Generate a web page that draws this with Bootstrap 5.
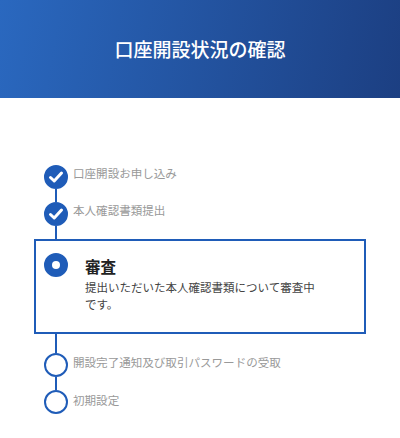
<!DOCTYPE html>
<html lang="ja">
<head>
<meta charset="utf-8">
<link href="https://cdn.jsdelivr.net/npm/bootstrap@5.3.0/dist/css/bootstrap.min.css" rel="stylesheet">
<style>
html,body{height:438px;overflow:hidden;}
body{font-family:"Noto Sans CJK JP","Liberation Sans",sans-serif;background:#fff;}
.hero{height:98px;background:linear-gradient(100deg,#2a68bf 0%,#1c3f82 100%);color:#fff;}
.hero h1{font-size:19px;font-weight:500;margin:0;}
.track{padding:67px 34px 0;}
.stepline{display:flex;align-items:stretch;height:37px;padding-left:10px;gap:5px;}
.stepline.last{height:24px;}
.dot{flex:none;width:24px;height:24px;border-radius:50%;border:2px solid #1f5cb8;background:#fff;display:flex;align-items:center;justify-content:center;}
.dot.done,.dot.now{background:#1f5cb8;}
.dot.now::after{content:"";width:8px;height:8px;border-radius:50%;background:#fff;}
.connect{display:block;width:2px;background:#1f5cb8;margin-left:21px;}
.c19{height:19px;}
.stepline .lbl{font-size:11.55px;line-height:16px;color:#999;white-space:nowrap;font-weight:400;}
.stepline .lbl.low1{padding-top:1px;}
.stepline .lbl.low2{padding-top:2px;}
.stepcol{display:flex;flex-direction:column;flex:none;width:24px;}
.stepcol .connect{margin-left:11px;flex:1;}
.activebox{height:95px;border:2px solid #1f5cb8;padding:12px 8px 0 8px;gap:17px;}
.activebox .ttl{font-size:15.5px;font-weight:700;line-height:22px;color:#222;margin:2px 0 2px;}
.activebox .txt{font-size:11.5px;line-height:17px;color:#444;margin:0;width:236px;}
</style>
</head>
<body>
<header class="hero d-flex align-items-center justify-content-center">
<h1>口座開設状況の確認</h1>
</header>
<main class="track">
<div class="stepline">
<div class="stepcol"><span class="dot done"><svg width="16" height="14" viewBox="0 0 16 14"><path d="M2.5 7.5 6.2 11 13.5 3" fill="none" stroke="#fff" stroke-width="3" stroke-linecap="round" stroke-linejoin="round"/></svg></span><span class="connect"></span></div>
<span class="lbl">口座開設お申し込み</span>
</div>
<div class="stepline">
<div class="stepcol"><span class="dot done"><svg width="16" height="14" viewBox="0 0 16 14"><path d="M2.5 7.5 6.2 11 13.5 3" fill="none" stroke="#fff" stroke-width="3" stroke-linecap="round" stroke-linejoin="round"/></svg></span><span class="connect"></span></div>
<span class="lbl">本人確認書類提出</span>
</div>
<section class="activebox d-flex align-items-start">
<span class="dot now"></span>
<div>
<p class="ttl">審査</p>
<p class="txt">提出いただいた本人確認書類について審査中です。</p>
</div>
</section>
<span class="connect c19"></span>
<div class="stepline">
<div class="stepcol"><span class="dot"></span><span class="connect"></span></div>
<span class="lbl low1">開設完了通知及び取引パスワードの受取</span>
</div>
<div class="stepline last">
<div class="stepcol"><span class="dot"></span></div>
<span class="lbl low2">初期設定</span>
</div>
</main>
<script src="https://cdn.jsdelivr.net/npm/bootstrap@5.3.0/dist/js/bootstrap.bundle.min.js"></script>
</body>
</html>
